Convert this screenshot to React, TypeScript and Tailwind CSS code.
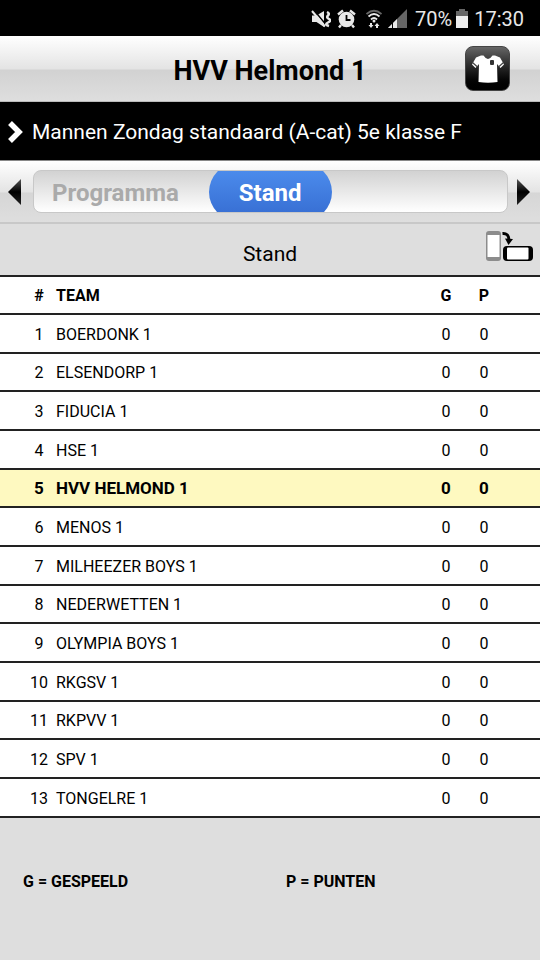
import React, { useState } from "react";
import clsx from "clsx";

interface TeamRow {
  name: string;
  played: number;
  points: number;
  own?: boolean;
}

const teams: TeamRow[] = [
  { name: "BOERDONK 1", played: 0, points: 0 },
  { name: "ELSENDORP 1", played: 0, points: 0 },
  { name: "FIDUCIA 1", played: 0, points: 0 },
  { name: "HSE 1", played: 0, points: 0 },
  { name: "HVV HELMOND 1", played: 0, points: 0, own: true },
  { name: "MENOS 1", played: 0, points: 0 },
  { name: "MILHEEZER BOYS 1", played: 0, points: 0 },
  { name: "NEDERWETTEN 1", played: 0, points: 0 },
  { name: "OLYMPIA BOYS 1", played: 0, points: 0 },
  { name: "RKGSV 1", played: 0, points: 0 },
  { name: "RKPVV 1", played: 0, points: 0 },
  { name: "SPV 1", played: 0, points: 0 },
  { name: "TONGELRE 1", played: 0, points: 0 },
];

const MutedIcon = () => (
  <svg width="20" height="20" viewBox="0 0 20 20" aria-hidden="true">
    <path d="M1 6.500h4.500L13 2v16l-7.500-5H1z" fill="#e8e8e8" />
    <path d="M2 0l14 17" stroke="#000" strokeWidth="1.500" />
    <path d="M1 2l13 15.500" stroke="#e8e8e8" strokeWidth="2" />
    <path
      d="M16 3q3 1.500 1 3.500t1 3.500-1 3.500 1 3.500"
      fill="none"
      stroke="#e8e8e8"
      strokeWidth="2.500"
    />
  </svg>
);

const AlarmIcon = () => (
  <svg width="19" height="20" viewBox="0 0 19 20" aria-hidden="true">
    <path
      d="M1 5.500l5-4M18 5.500l-5-4M4 16l-2 2.500M15 16l2 2.500"
      stroke="#e8e8e8"
      strokeWidth="2.4"
    />
    <circle cx="9.5" cy="10.5" r="7.800" fill="#e8e8e8" />
    <path d="M9.500 6v5h4" fill="none" stroke="#000" strokeWidth="1.800" />
  </svg>
);

const WifiIcon = () => (
  <svg width="16" height="20" viewBox="0 0 16 20" aria-hidden="true">
    <g fill="none" strokeWidth="1.800">
      <path d="M.5 5q7.500-6.500 15 0" stroke="#666" />
      <path d="M2.500 7.500q5.500-5 11 0" stroke="#e8e8e8" />
      <path d="M5 10.500q3-3 6 0" stroke="#e8e8e8" />
    </g>
    <circle cx="8" cy="12" r="1.500" fill="#e8e8e8" />
    <path
      d="M4 14h2v2h1.500L5 19l-2.500-3H4zM10 19h2v-2h1.500L11 14l-2.500 3H10z"
      fill="#e8e8e8"
    />
  </svg>
);

const SignalIcon = () => (
  <svg width="19" height="19" viewBox="0 0 19 19" aria-hidden="true">
    <path d="M0 19L19 0v19z" fill="#666" />
    <path d="M0 19l4-4v4z" fill="#e8e8e8" />
    <path d="M5 19v-5l4-4v9z" fill="#e8e8e8" />
    <path d="M4.500 14v5" stroke="#000" />
  </svg>
);

const BatteryIcon = () => (
  <svg width="12" height="19" viewBox="0 0 12 19" aria-hidden="true">
    <path d="M3 0h6v2h3v17H0V2h3z" fill="#666" />
    <path d="M0 7h12v12H0z" fill="#eee" />
  </svg>
);

const ShirtIcon = () => (
  <svg width="34" height="30" viewBox="0 0 34 30" aria-hidden="true">
    <path
      d="M10 1.500h2.500q4.500 7 9 0H24l5 2 4 7-3.500 3.500-3.500-4 .5 18q-9.500 1.500-19 0L8 10l-3.500 4L1 10.500l4-7z"
      fill="#fff"
    />
    <path
      d="M1.500 8.500l5 4.500M32.500 8.500l-5 4.500"
      stroke="#444"
      strokeWidth="1.200"
    />
    <rect x="19" y="6" width="4" height="5" rx="1" fill="#333" />
  </svg>
);

const RotateIcon = () => (
  <svg width="47" height="31" viewBox="0 0 47 31" aria-hidden="true">
    <rect width="15" height="30" rx="3" fill="#8c8c8c" />
    <rect x="1.500" y="4" width="12" height="22" fill="#fff" />
    <rect x="17" y="15" width="30" height="15" rx="4" fill="#000" />
    <rect x="21" y="16.500" width="21.500" height="12" rx="1" fill="#fff" />
    <path
      d="M16.500 2.500q6-.5 6.500 6"
      fill="none"
      stroke="#000"
      strokeWidth="3"
    />
    <path d="M19 7.500l8 .5-4.500 6z" fill="#000" />
  </svg>
);

const StatusBar = () => (
  <div className="flex h-9 items-center justify-end bg-black pt-px pr-4 text-[20px] text-[#e8e8e8]">
    <div className="mr-2 flex items-center gap-1.5">
      <MutedIcon />
      <AlarmIcon />
      <span className="ml-1 flex items-center gap-1.5">
        <WifiIcon />
        <SignalIcon />
      </span>
    </div>
    <span className="mr-1">70%</span>
    <BatteryIcon />
    <span className="ml-1.5">17:30</span>
  </div>
);

const Header = () => (
  <header className="relative flex h-[66px] items-center justify-center border-b border-[#bbb] bg-[linear-gradient(#fff_0%,#e4e4e4_50%,#d2d2d2_53%,#dedede_100%)]">
    <h1 className="pt-1.5 text-[27px] font-bold">HVV Helmond 1</h1>
    <button
      type="button"
      aria-label="Team"
      className="absolute right-[30px] flex size-[45px] items-center justify-center rounded-lg border border-[#444] bg-linear-to-b from-[#666] to-black"
    >
      <ShirtIcon />
    </button>
  </header>
);

const tabs = ["Programma", "Stand"];

const TabBar = () => {
  const [active, setActive] = useState("Stand");

  return (
    <nav className="flex h-16 items-center justify-between border-t border-b-2 border-t-[#888] border-b-[#c8c8c8] bg-[linear-gradient(#fff_0%,#e4e4e4_50%,#d6d6d6_53%,#dedede_100%)] px-2">
      <button type="button" aria-label="Vorige">
        <svg width="13" height="26" viewBox="0 0 13 26">
          <path d="M13 0v26L0 13z" fill="url(#arrow)" />
          <defs>
            <linearGradient id="arrow" x2="0" y2="1">
              <stop offset="0" stopColor="#555" />
              <stop offset="0.5" stopColor="#000" />
              <stop offset="1" stopColor="#222" />
            </linearGradient>
          </defs>
        </svg>
      </button>
      <div className="mr-[9px] ml-3 flex h-[43px] flex-1 items-center overflow-hidden rounded-lg border border-[#c8c8c8] bg-linear-to-b from-[#d2d2d2] to-white">
        {tabs.map((tab) => (
          <button
            key={tab}
            type="button"
            onClick={() => setActive(tab)}
            className={clsx(
              "h-[58px] shrink-0 rounded-[29px] pt-0.5 text-2xl font-bold",
              tab === active
                ? "ml-3 bg-linear-to-b from-[#4f90f0] to-[#356bd0] px-[30px] text-white"
                : "px-[18px] text-[#aaa]"
            )}
          >
            {tab}
          </button>
        ))}
      </div>
      <button type="button" aria-label="Volgende" className="mr-0.5">
        <svg width="13" height="26" viewBox="0 0 13 26">
          <path d="M0 0v26l13-13z" fill="url(#arrow)" />
        </svg>
      </button>
    </nav>
  );
};

const StandingsTable = () => (
  <table className="w-full border-t-2 border-[#222] bg-white text-base">
    <thead>
      <tr className="h-[38px] border-b-2 border-[#222]">
        <th className="w-14 pt-0.5 pl-[22px] text-center">#</th>
        <th className="pt-0.5 text-left">TEAM</th>
        <th className="w-[38px] pt-0.5 text-center">G</th>
        <th className="w-[75px] pt-0.5 pr-[37px] text-center">P</th>
      </tr>
    </thead>
    <tbody>
      {teams.map((team, i) => (
        <tr
          key={team.name}
          className={clsx(
            "h-[39px] border-b-2 border-[#222] nth-[3n+2]:h-[38px]",
            team.own && "bg-[#fef9c0] text-[17px] font-bold"
          )}
        >
          <td className="pt-0.5 pl-[22px] text-center">{i + 1}</td>
          <td className="pt-0.5">{team.name}</td>
          <td className="pt-0.5 text-center">{team.played}</td>
          <td className="pt-0.5 pr-[37px] text-center">{team.points}</td>
        </tr>
      ))}
    </tbody>
  </table>
);

export default function App() {
  return (
    <div className="flex min-h-screen flex-col bg-[#dedede] font-[Roboto,sans-serif] text-black">
      <StatusBar />
      <Header />
      <a
        href="#competitie"
        className="flex h-[58px] items-center gap-2 bg-black px-2 pt-1 text-[21px] text-white"
      >
        <svg width="16" height="24" viewBox="0 0 16 24" aria-hidden="true">
          <path
            d="M2 2l9 9-9 9"
            fill="none"
            stroke="#fff"
            strokeWidth="5.500"
          />
        </svg>
        Mannen Zondag standaard (A-cat) 5e klasse F
      </a>
      <TabBar />
      <div className="relative flex h-[51px] items-center justify-center">
        <h2 className="pt-2.5 text-[21px]">Stand</h2>
        <span className="absolute top-[7px] right-[7px]">
          <RotateIcon />
        </span>
      </div>
      <StandingsTable />
      <div className="grid grid-cols-2 px-[23px] pt-[52px] text-base font-bold">
        <span>G = GESPEELD</span>
        <span className="pl-4">P = PUNTEN</span>
      </div>
    </div>
  );
}
